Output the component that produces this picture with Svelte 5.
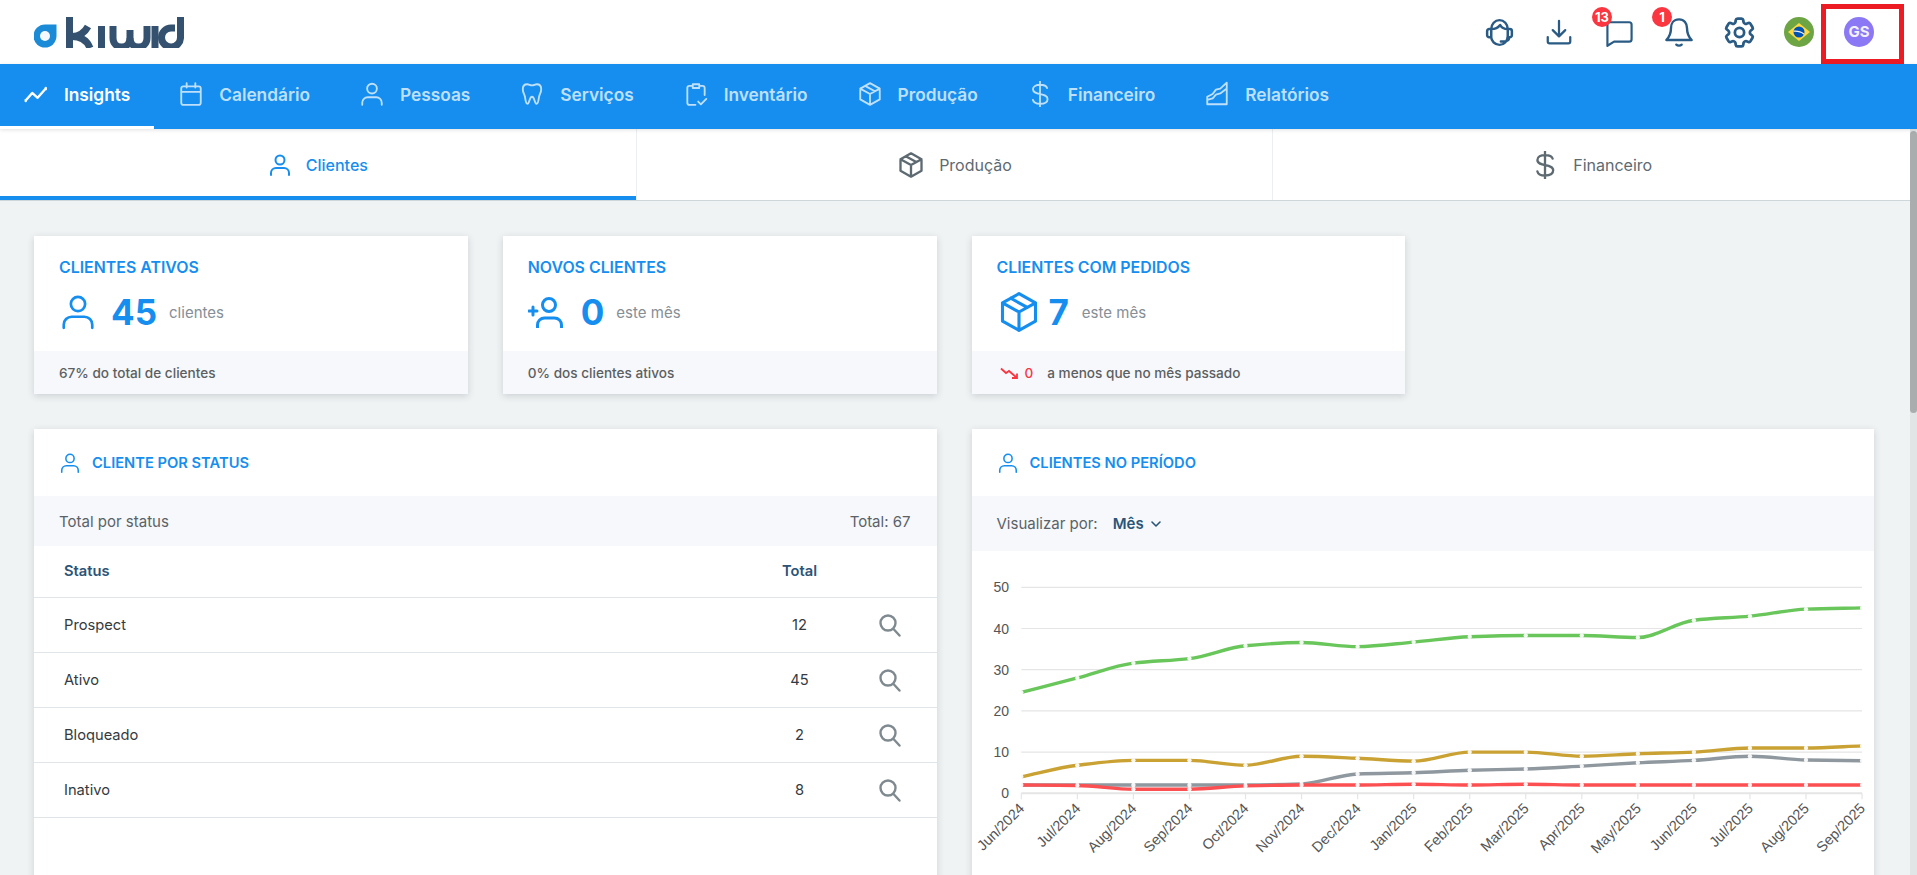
<script>
  const icons = {
    user: 'M12 2.500a4.500 4.500 0 1 1 0 9a4.500 4.500 0 0 1 0-9z M3 22v-2a5 5 0 0 1 5-5h8a5 5 0 0 1 5 5v2',
    calendar: 'M5 5h14a2 2 0 0 1 2 2v13a2 2 0 0 1-2 2H5a2 2 0 0 1-2-2V7a2 2 0 0 1 2-2z M3 10h18 M8 2v4 M16 2v4',
    trend: 'M2.500 18l6-7 5 4.500L21 7 M2.500 17.500v1 M21 6.500v1',
    tooth: 'M7.500 3C5 3 3.500 5 3.500 7.500c0 3 1.500 4.500 2 7 .4 2 .6 6.500 2.300 6.500 2 0 1.700-6.500 4.200-6.500s2.200 6.500 4.200 6.500c1.700 0 1.900-4.500 2.300-6.500.5-2.500 2-4 2-7C20.500 5 19 3 16.500 3c-2 0-2.500 1-4.500 1S9.500 3 7.500 3z',
    clipboard: 'M8.500 4.500H6a2 2 0 0 0-2 2V20a2 2 0 0 0 2 2h5.500 M15.500 4.500H18a2 2 0 0 1 2 2V13 M9 3h6v3.500H9z M14 19l2.500 2.500 5-5',
    box: 'M12 2l9 5v10l-9 5-9-5V7z M3 7l9 5 9-5 M12 12v10 M7.500 4.500l9 5',
    dollar: 'M12 .5v23 M18.500 6.500C18 4.500 15.500 3.500 12 3.500c-3.500 0-6.500 1.500-6.500 4.200 0 6 13.500 3 13.500 8.800 0 3-3 4.500-7 4.500-3.500 0-6-1.500-6.500-3.500',
    report: 'M3 21.500v-7l5-2.500 3-4 4-1 6-5.500v20z M3 17.500l5-1.500 3-3.500 4-1 6-4.500',
    headset: 'M6 15.500V9.500a6 6.500 0 0 1 12 0v5c0 3.500-2.500 6.500-6 6.500s-6-3-6-5.500z M6 9.500c3 0 5-1 6.500-3 1 2 3 3 5.500 3 M6 9.500H4.500A1.500 1.500 0 0 0 3 11v3a1.500 1.500 0 0 0 1.500 1.500H6 M18 9.500h1.500A1.500 1.500 0 0 1 21 11v3a1.500 1.500 0 0 1-1.500 1.500H18 M19 15.500c0 2-1.500 3-4 3h-2',
    download: 'M12 3v12 M7 10.500l5 5 5-5 M3 16v3.500A1.500 1.500 0 0 0 4.500 21h15a1.500 1.500 0 0 0 1.500-1.500V16',
    chat: 'M4 3.500h16a2 2 0 0 1 2 2v12a2 2 0 0 1-2 2H7.500L2 23V5.500a2 2 0 0 1 2-2z',
    bell: 'M12 2.500c-4 0-6 3-6 6.500 0 5-1.500 7-3.500 9h19c-2-2-3.500-4-3.500-9 0-3.500-2-6.500-6-6.500z M10 21.500c1 1 3 1 4 0',
    gear: 'M9.594 3.94c.09-.542.56-.94 1.11-.94h2.593c.55 0 1.02.398 1.11.94l.213 1.281c.063.374.313.686.645.87.074.04.147.083.22.127.324.196.72.257 1.075.124l1.217-.456a1.125 1.125 0 011.37.49l1.296 2.247a1.125 1.125 0 01-.26 1.431l-1.003.827c-.293.24-.438.613-.431.992a6.759 6.759 0 010 .255c-.007.378.138.75.43.99l1.005.828c.424.35.534.954.26 1.43l-1.298 2.247a1.125 1.125 0 01-1.369.491l-1.217-.456c-.355-.133-.75-.072-1.076.124a6.57 6.57 0 01-.22.128c-.331.183-.581.495-.644.869l-.213 1.28c-.09.543-.56.941-1.11.941h-2.594c-.55 0-1.02-.398-1.11-.94l-.213-1.281c-.062-.374-.312-.686-.644-.87a6.52 6.52 0 01-.22-.127c-.325-.196-.72-.257-1.076-.124l-1.217.456a1.125 1.125 0 01-1.369-.49l-1.297-2.247a1.125 1.125 0 01.26-1.431l1.004-.827c.292-.24.437-.613.43-.992a6.932 6.932 0 010-.255c.007-.378-.138-.75-.43-.99l-1.004-.828a1.125 1.125 0 01-.26-1.43l1.297-2.247a1.125 1.125 0 011.37-.491l1.216.456c.356.133.751.072 1.076-.124.072-.044.146-.087.22-.128.332-.183.582-.495.644-.869l.214-1.281z M15 12a3 3 0 11-6 0 3 3 0 016 0z',
    search: 'M10 2.500a7.500 7.500 0 1 1 0 15a7.500 7.500 0 0 1 0-15z M15.500 16l6 6.500'
  };

  const navItems = [
    { label: 'Insights', icon: 'trend', active: true },
    { label: 'Calendário', icon: 'calendar' },
    { label: 'Pessoas', icon: 'user' },
    { label: 'Serviços', icon: 'tooth' },
    { label: 'Inventário', icon: 'clipboard' },
    { label: 'Produção', icon: 'box' },
    { label: 'Financeiro', icon: 'dollar' },
    { label: 'Relatórios', icon: 'report' }
  ];
  const tabs = [
    { label: 'Clientes', icon: 'user', active: true },
    { label: 'Produção', icon: 'box' },
    { label: 'Financeiro', icon: 'dollar' }
  ];
  const rows = [['Prospect', 12], ['Ativo', 45], ['Bloqueado', 2], ['Inativo', 8]];

  const months = ['Jun/2024','Jul/2024','Aug/2024','Sep/2024','Oct/2024','Nov/2024','Dec/2024','Jan/2025','Feb/2025','Mar/2025','Apr/2025','May/2025','Jun/2025','Jul/2025','Aug/2025','Sep/2025'];
  const series = [
    { color: '#69c65a', data: [24.5,28,31.6,32.7,35.8,36.6,35.6,36.7,38,38.3,38.3,37.8,42,43,44.7,45] },
    { color: '#c9a233', data: [4,6.8,8,8,6.8,9,8.5,7.8,10,10,9,9.6,10,11,11,11.5] },
    { color: '#8f989f', data: [2,2,2,2,2,2.3,4.7,5,5.6,5.9,6.6,7.4,8,9,8.1,7.9] },
    { color: '#fb4f52', data: [2,1.9,1,1,1.8,2,2,2.2,2,2.2,2,2,2,2,2,2] }
  ];
  const X0 = 49.3, DX = 56.05, Y0 = 242.3, DY = 4.12;
  const px = (i) => X0 + DX * i;
  const py = (v) => Y0 - DY * v;
  const ticks = [0, 10, 20, 30, 40, 50];

  function monotone(data) {
    const n = data.length;
    const pts = data.map((v, i) => [px(i), py(v)]);
    const s = [];
    for (let i = 0; i < n - 1; i++) s.push((pts[i + 1][1] - pts[i][1]) / DX);
    const m = pts.map((_, i) => {
      if (i === 0) return s[0];
      if (i === n - 1) return s[n - 2];
      if (s[i - 1] * s[i] <= 0) return 0;
      return (2 * s[i - 1] * s[i]) / (s[i - 1] + s[i]);
    });
    let d = `M${pts[0][0]} ${pts[0][1]}`;
    for (let i = 0; i < n - 1; i++) {
      const h = DX / 3;
      d += `C${pts[i][0] + h} ${pts[i][1] + m[i] * h} ${pts[i + 1][0] - h} ${pts[i + 1][1] - m[i + 1] * h} ${pts[i + 1][0]} ${pts[i + 1][1]}`;
    }
    return d;
  }
</script>

{#snippet icon(name, size, cls = '')}
  <svg class="ic {cls}" width={size} height={size} viewBox="0 0 24 24" aria-hidden="true"><path d={icons[name]} /></svg>
{/snippet}

<div class="app">
  <header class="top">
    <div class="logo">
      <svg width="150" height="31" viewBox="0 0 150 31" aria-label="Kiwid">
        <path class="drop" d="M11 7.500H22.500V19A11.500 11.500 0 1 1 11 7.500Z" />
        <circle cx="11" cy="19" r="5" fill="#f3f8fc" />
        <g class="mark">
          <path d="M35.500 0V31" />
          <path d="M38 19.500C46 19.500 51 15 54 9.500" />
          <path d="M38 19.500C47 19.500 53 23.500 56 31" />
          <path d="M67.500 9V31" />
          <path d="M79 9V21C79 33 96 33 96 21V13" />
          <path d="M96 21C96 33 113 33 113 21V9" />
          <path d="M121 9V31" />
          <path d="M146.500 0V20A9.500 9.500 0 1 1 137 11H141" />
        </g>
      </svg>
    </div>
    <div class="tools">
      <button class="tool">{@render icon('headset', 33)}</button>
      <button class="tool">{@render icon('download', 30)}</button>
      <button class="tool">{@render icon('chat', 29)}<span class="badge">13</span></button>
      <button class="tool">{@render icon('bell', 32)}<span class="badge">1</span></button>
      <button class="tool">{@render icon('gear', 37)}</button>
      <button class="tool">
        <svg width="30" height="30" viewBox="0 0 30 30" aria-label="Brasil">
          <circle cx="15" cy="15" r="15" fill="#6da544" />
          <path d="M15 6L26 15L15 24L4 15Z" fill="#ffda44" />
          <circle cx="15" cy="15" r="5.500" fill="#0052b4" />
          <path d="M9.800 13.500C13 13 17.500 14 20.200 16.500L19.700 17.700C17 15.500 13 14.500 9.600 15Z" fill="#f0f0f0" />
        </svg>
      </button>
      <button class="tool"><span class="avatar">GS</span></button>
    </div>
    <div class="mark-box"></div>
  </header>

  <nav class="nav">
    {#each navItems as item}
      <a class="nav-item" class:active={item.active} href="#top">
        {@render icon(item.icon, 26)}
        <span>{item.label}</span>
      </a>
    {/each}
  </nav>

  <div class="body">
    <div class="scroller">
      <div class="tabs">
        {#each tabs as tab}
          <div class="tab" class:active={tab.active}>
            {@render icon(tab.icon, tab.active ? 24 : 28)}
            <span>{tab.label}</span>
          </div>
        {/each}
      </div>

      <main class="content">
        <section class="cards">
          <article class="card">
            <div class="card-body">
              <h3>CLIENTES ATIVOS</h3>
              <div class="stat">
                {@render icon('user', 38)}
                <strong>45</strong>
                <span>clientes</span>
              </div>
            </div>
            <footer class="card-foot">67% do total de clientes</footer>
          </article>
          <article class="card">
            <div class="card-body">
              <h3>NOVOS CLIENTES</h3>
              <div class="stat">
                <svg class="ic" width="36" height="32" viewBox="0 0 36 32" aria-hidden="true">
                  <path d="M21 2.500a6.500 6.500 0 1 1 0 13a6.500 6.500 0 0 1 0-13z M9.500 32v-3a7 7 0 0 1 7-7h10a7 7 0 0 1 7 7v3" stroke-width="3" />
                  <path d="M1 15h8 M5 11v8" stroke-width="3" />
                </svg>
                <strong class="wide">0</strong>
                <span>este mês</span>
              </div>
            </div>
            <footer class="card-foot">0% dos clientes ativos</footer>
          </article>
          <article class="card">
            <div class="card-body">
              <h3>CLIENTES COM PEDIDOS</h3>
              <div class="stat">
                {@render icon('box', 44)}
                <strong class="narrow">7</strong>
                <span>este mês</span>
              </div>
            </div>
            <footer class="card-foot">
              <svg class="down" width="18" height="12" viewBox="0 0 18 12" aria-hidden="true">
                <path d="M1 1.500L6 6L9 4L16.500 10.500 M12 11H17V6.500" />
              </svg>
              <b>0</b>
              <span>a menos que no mês passado</span>
            </footer>
          </article>
        </section>

        <section class="panels">
          <article class="panel">
            <div class="panel-head">{@render icon('user', 22)}<h3>CLIENTE POR STATUS</h3></div>
            <div class="panel-sub short"><span>Total por status</span><span>Total: 67</span></div>
            <table>
              <thead>
                <tr><th>Status</th><th class="num">Total</th><th class="act"></th></tr>
              </thead>
              <tbody>
                {#each rows as r}
                  <tr>
                    <td>{r[0]}</td>
                    <td class="num">{r[1]}</td>
                    <td class="act">{@render icon('search', 24, 'search')}</td>
                  </tr>
                {/each}
              </tbody>
            </table>
          </article>

          <article class="panel">
            <div class="panel-head">{@render icon('user', 22)}<h3>CLIENTES NO PERÍODO</h3></div>
            <div class="panel-sub tall">
              <span>Visualizar por:</span>
              <span class="select">Mês
                <svg width="12" height="12" viewBox="0 0 12 12" aria-hidden="true"><path d="M2 4l4 4 4-4" /></svg>
              </span>
            </div>
            <svg class="chart" width="902" height="320" viewBox="0 0 902 320">
              {#each ticks as t}
                <line x1={X0} x2={px(15)} y1={py(t)} y2={py(t)} class="grid" class:base={t === 0} />
                <text x="37" y={py(t) + 5} text-anchor="end">{t}</text>
              {/each}
              {#each months as m, i}
                <line x1={px(i)} x2={px(i)} y1={Y0} y2={Y0 + 6} class="grid" />
                <text class="xl" x={px(i) + 4} y={Y0 + 16} text-anchor="end" transform="rotate(-45 {px(i) + 4} {Y0 + 16})">{m}</text>
              {/each}
              {#each series as s}
                <path class="line" d={monotone(s.data)} stroke={s.color} />
                {#each s.data as v, i}
                  <circle cx={px(i)} cy={py(v)} r="2.200" fill="#fff" opacity="0.9" />
                {/each}
              {/each}
            </svg>
          </article>
        </section>
      </main>
    </div>
    <div class="bar"><div class="thumb"></div></div>
  </div>
</div>

<style>
  :global(body) { margin: 0; background: #f0f3f4; font-family: Inter, "Noto Sans", sans-serif; }
  .app { height: 100vh; display: flex; flex-direction: column; overflow: hidden; }
  .ic { fill: none; stroke: currentColor; stroke-width: 1.700; stroke-linecap: round; stroke-linejoin: round; flex: none; display: block; }

  .top { position: relative; height: 64px; flex: none; background: #fff; display: flex; align-items: center; justify-content: space-between; padding: 0 28px 0 34px; }
  .logo { display: flex; }
  .drop { fill: #1b8bd8; }
  .mark path { fill: none; stroke: #34526f; stroke-width: 7; }
  .tools { display: flex; }
  .tool { position: relative; width: 60px; height: 64px; border: 0; padding: 0; background: none; color: #2a5b84; display: flex; align-items: center; justify-content: center; }
  .tool :global(.ic) { stroke-width: 1.800; }
  .badge { position: absolute; top: 7px; left: 3px; height: 20px; min-width: 20px; border-radius: 10px; background: #fa3640; color: #fff; font-size: 13px; font-weight: 700; line-height: 20px; text-align: center; font-family: Inter, sans-serif; }
  .avatar { width: 30px; height: 30px; border-radius: 50%; background: #8b78f5; color: #f3f0ff; font-size: 15px; font-weight: 700; line-height: 30px; text-align: center; font-family: Inter, sans-serif; }
  .mark-box { position: absolute; top: 4px; right: 13px; width: 83px; height: 60px; box-sizing: border-box; border: 5px solid #ed1c24; }

  .nav { position: relative; z-index: 2; flex: none; height: 65px; background: #158eef; display: flex; box-shadow: 0 1px 4px rgba(0,0,0,.12); }
  .nav-item { box-sizing: border-box; height: 65px; padding: 0 25px 5px 24px; display: flex; align-items: center; gap: 15px; color: #bfe0fb; font-size: 17.300px; font-weight: 600; text-decoration: none; }
  .nav-item.active { color: #fff; box-shadow: inset 0 -3px 0 #fff; padding-left: 23px; padding-right: 24px; }
  .nav-item.active :global(.ic) { stroke-width: 2.200; }

  .body { flex: 1; min-height: 0; display: flex; }
  .scroller { flex: 1; min-width: 0; overflow: hidden; }
  .bar { width: 7px; flex: none; background: #e1e5e6; }
  .thumb { height: 282px; margin-top: 2px; border-radius: 4px; background: #a9adae; }

  .tabs { display: grid; grid-template-columns: repeat(3, 1fr); background: #fff; border-bottom: 1px solid #cfd6da; }
  .tab { box-sizing: border-box; height: 71px; display: flex; align-items: center; justify-content: center; gap: 14px; color: #5d6a72; font-size: 16px; border-right: 1px solid #eceff1; }
  .tab :global(.ic) { stroke-width: 2; }
  .tab:last-child { border-right: 0; }
  .tab.active { color: #158eef; font-weight: 500; box-shadow: inset 0 -4px 0 #158eef; }

  .content { box-sizing: border-box; min-height: 1902px; padding: 35px 36px 35px 34px; }
  .cards { display: grid; grid-template-columns: repeat(4, 1fr); gap: 35px; }
  .card { background: #fff; box-shadow: 0 2px 7px rgba(40,50,60,.18); }
  .card-body { box-sizing: border-box; height: 115px; padding: 22px 25px 0; }
  h3 { margin: 0; color: #158eef; font-weight: 600; }
  .card h3 { font-size: 15.900px; line-height: 20px; }
  .stat { display: flex; align-items: center; height: 46px; margin-top: 11px; color: #158eef; }
  .stat strong { font-size: 35px; font-weight: 700; line-height: 46px; margin: 0 12px 0 14px; }
  .stat strong.wide { margin-left: 17px; margin-right: 12px; }
  .stat strong.narrow { margin-left: 8px; margin-right: 13px; }
  .stat span { color: #868e96; font-size: 15px; }
  .card-foot { height: 43px; box-sizing: border-box; background: #f6f8fb; padding: 0 25px; display: flex; align-items: center; color: #5c5f62; font-size: 13.600px; font-weight: 500; }
  .down { margin-left: 3px; }
  .down path { fill: none; stroke: #fa3640; stroke-width: 1.800; }
  .card-foot b { color: #fa3640; font-weight: 500; margin: 0 14px 0 7px; }

  .panels { display: grid; grid-template-columns: repeat(2, 1fr); gap: 35px; margin-top: 35px; }
  .panel { background: #fff; min-height: 640px; box-shadow: 0 2px 7px rgba(40,50,60,.18); }
  .panel-head { height: 67px; box-sizing: border-box; display: flex; align-items: center; gap: 11px; padding: 0 25px; color: #158eef; }
  .panel-head h3 { font-size: 14.700px; }
  .panel-sub { box-sizing: border-box; background: #f6f8fb; padding: 0 26px 0 25px; display: flex; align-items: center; color: #5a6268; font-size: 15px; }
  .panel-sub.short { height: 50px; justify-content: space-between; }
  .panel-sub.tall { height: 55px; gap: 15px; }
  .select { display: flex; align-items: center; gap: 6px; color: #2a5578; font-weight: 600; }
  .select path { fill: none; stroke: #2a5578; stroke-width: 1.600; stroke-linecap: round; stroke-linejoin: round; }

  table { width: 100%; border-collapse: collapse; table-layout: fixed; font-size: 14.700px; color: #343a40; }
  th, td { padding: 0 0 0 30px; text-align: left; border-bottom: 1px solid #e0e5ea; box-sizing: border-box; }
  th { height: 51px; color: #2c5378; font-weight: 600; }
  td { height: 55px; }
  .num { width: 86px; padding: 0; text-align: center; }
  .act { width: 94px; padding: 0; }
  td.act { color: #7e8a90; }
  td.act :global(.search) { margin: 0 auto; stroke-width: 2.400; }

  .chart { display: block; }
  .chart text { font-family: "Liberation Sans", Arial, sans-serif; font-size: 14px; fill: #555; }
  .chart text.xl { font-size: 14.500px; }
  .grid { stroke: #e5e5e5; stroke-width: 1.200; }
  .grid.base { stroke-width: 2; }
  .line { fill: none; stroke-width: 3.400; }
</style>
